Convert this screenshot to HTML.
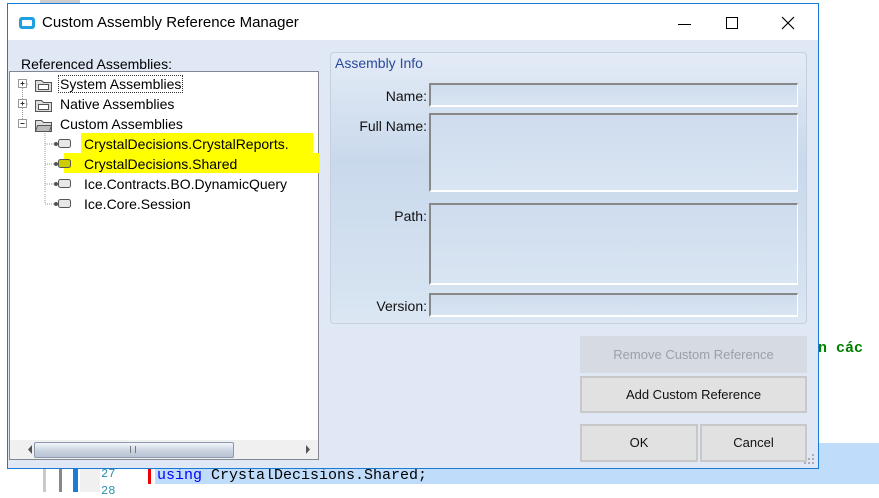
<!DOCTYPE html>
<html><head><meta charset="utf-8"><style>
*{margin:0;padding:0;box-sizing:border-box}
body{width:879px;height:492px;overflow:hidden;background:#fff;position:relative;font-family:"Liberation Sans",sans-serif;}
.a{position:absolute}
.dlg{left:7px;top:3px;width:812px;height:466px;border:1px solid #1a7ad4;background:#fff}
.client{left:0;top:36px;width:810px;height:428px;background:#dfe8f4}
.t{font-size:14px;color:#000;white-space:nowrap}
.tree{left:1px;top:31px;width:310px;height:389px;background:#fff;border:1px solid #828790}
.ti{font-size:14px;position:absolute;white-space:nowrap;line-height:18px}
.fld{position:absolute;background:linear-gradient(#cfdcee,#d9e5f2);border-top:2px solid #888;border-left:2px solid #888;border-right:1px solid #fff;border-bottom:2px solid #fff}
.lbl{position:absolute;font-size:14px;text-align:right;width:90px;color:#111}
.btn{position:absolute;background:#e1e1e1;border:2px solid #c8c8c8;font-size:13px;text-align:center;color:#111}
</style></head><body>
<div class="a" style="left:43px;top:468px;width:3px;height:24px;background:#c9c9c9"></div>
<div class="a" style="left:59px;top:468px;width:3px;height:24px;background:#888"></div>
<div class="a" style="left:73px;top:468px;width:5px;height:24px;background:#1c7bd6"></div>
<div class="a" style="left:80px;top:468px;width:20px;height:24px;background:#f0f0f0"></div>
<div class="a" style="left:155px;top:468px;width:724px;height:16px;background:#bfdcfa"></div>
<div class="a" style="left:818px;top:443px;width:61px;height:41px;background:#bfdcfa"></div>
<div class="a" style="left:101px;top:467px;font:12px 'Liberation Mono',monospace;color:#2b91af">27</div>
<div class="a" style="left:101px;top:484px;font:12px 'Liberation Mono',monospace;color:#2b91af">28</div>
<div class="a" style="left:148px;top:469px;width:3px;height:15px;background:#e00"></div>
<div class="a" style="left:157px;top:467px;font:15px 'Liberation Mono',monospace;white-space:pre"><span style="color:#0000ff">using</span> CrystalDecisions.Shared;</div>
<div class="a" style="left:818px;top:340px;font:bold 15px 'Liberation Mono',monospace;color:#008000;white-space:pre">n các </div>
<div class="a" style="left:40px;top:0;width:40px;height:3px;background:#ccc"></div>

<div class="a dlg">
 <svg class="a" style="left:10px;top:12px" width="18" height="14"><rect x="1" y="1" width="16" height="12" rx="3" fill="#1ea0e0"/><rect x="4" y="4" width="10" height="6" rx="1" fill="#fff"/></svg>
 <div class="a t" style="left:34px;top:10px;font-size:15px">Custom Assembly Reference Manager</div>
 <div class="a" style="left:670px;top:20px;width:13px;height:1px;background:#000"></div>
 <div class="a" style="left:718px;top:13px;width:12px;height:12px;border:1px solid #000"></div>
 <svg class="a" style="left:773px;top:12px" width="14" height="14"><path d="M1 1L13 13M13 1L1 13" stroke="#000" stroke-width="1.2"/></svg>
 <div class="a client">
  <div class="a t" style="left:13px;top:16px">Referenced Assemblies:</div>
  <div class="a tree">
   <svg class="a" style="left:0;top:0" width="120" height="150">
    <g stroke="#999" stroke-dasharray="1,1" fill="none">
     <path d="M12.5 14V52M13 32h6M13 12h6M35 55v66M35 72h10M35 92h10M35 112h10M35 132h10M35 122v10"/>
    </g>
    <g fill="#fff" stroke="#999"><rect x="8.5" y="7.5" width="8" height="8"/><rect x="8.5" y="27.5" width="8" height="8"/><rect x="8.5" y="47.5" width="8" height="8"/></g>
    <path d="M10.5 11.5h4M12.5 9.5v4M10.5 31.5h4M12.5 29.5v4M10.5 51.5h4" stroke="#333"/>
    <g stroke="#555" fill="#ddd"><path d="M25.5 8.5h6l2 2h8v9h-16z"/><rect x="28.5" y="12.5" width="10" height="5" fill="#fff"/>
    <path d="M25.5 28.5h6l2 2h8v9h-16z"/><rect x="28.5" y="32.5" width="10" height="5" fill="#fff"/>
    <path d="M25.5 48.5h6l2 2h8v9h-16z"/><path d="M27.5 53.5h14l-2 6h-14z" fill="#bbb"/></g>
    <g stroke="#555"><circle cx="46" cy="72" r="1.5" fill="#555"/><circle cx="46" cy="92" r="1.5" fill="#555"/><circle cx="46" cy="112" r="1.5" fill="#555"/><circle cx="46" cy="132" r="1.5" fill="#555"/></g>
   </svg>
   <div class="a" style="left:71px;top:61px;width:232px;height:20px;background:#ffff00"></div>
   <div class="a" style="left:54px;top:81px;width:256px;height:20px;background:#ffff00"></div>
   <svg class="a" style="left:0;top:0" width="120" height="150">
    <g stroke="#555"><rect x="48.5" y="67.5" width="12" height="8" rx="2" fill="#e8e8e8"/><rect x="48.5" y="87.5" width="12" height="8" rx="2" fill="#cccc00"/><rect x="48.5" y="107.5" width="12" height="8" rx="2" fill="#e8e8e8"/><rect x="48.5" y="127.5" width="12" height="8" rx="2" fill="#e8e8e8"/></g>
   </svg>
   <div class="ti" style="left:48px;top:3px;border:1px dotted #333;padding:0 1px;line-height:16px">System Assemblies</div>
   <div class="ti" style="left:50px;top:23px">Native Assemblies</div>
   <div class="ti" style="left:50px;top:43px">Custom Assemblies</div>
   <div class="ti" style="left:74px;top:63px">CrystalDecisions.CrystalReports.</div>
   <div class="ti" style="left:74px;top:83px">CrystalDecisions.Shared</div>
   <div class="ti" style="left:74px;top:103px">Ice.Contracts.BO.DynamicQuery</div>
   <div class="ti" style="left:74px;top:123px">Ice.Core.Session</div>
   <div class="a" style="left:0;top:368px;width:308px;height:19px;background:#f0f0f0"></div>
   <svg class="a" style="left:0;top:368px" width="308" height="19"><path d="M22 5l-4 4.5 4 4.5z" fill="#555"/><path d="M296 5l4 4.5-4 4.5z" fill="#555"/></svg>
   <div class="a" style="left:24px;top:370px;width:200px;height:16px;border:1px solid #8a99b0;border-radius:2px;background:linear-gradient(#f4f7fb,#c9d3e0 55%,#b7c3d3)"></div>
   <div class="a" style="left:120px;top:374px;width:6px;height:7px;border-left:1px solid #777;border-right:1px solid #777"></div>
  </div>
  <div class="a" style="left:322px;top:12px;width:477px;height:272px;border:1px solid #c5cfdd;border-radius:4px;background:linear-gradient(#e3ebf6,#c9d9ec 40%,#d6e3f1 90%,#dce7f3)"></div>
  <div class="a" style="left:327px;top:15px;font-size:14px;color:#2a4a9a">Assembly Info</div>
  <div class="lbl" style="left:329px;top:48px">Name:</div>
  <div class="lbl" style="left:329px;top:78px">Full Name:</div>
  <div class="lbl" style="left:329px;top:168px">Path:</div>
  <div class="lbl" style="left:329px;top:258px">Version:</div>
  <div class="fld" style="left:421px;top:43px;width:369px;height:24px"></div>
  <div class="fld" style="left:421px;top:73px;width:369px;height:79px"></div>
  <div class="fld" style="left:421px;top:163px;width:369px;height:82px"></div>
  <div class="fld" style="left:421px;top:253px;width:369px;height:24px"></div>
  <div class="btn" style="left:572px;top:296px;width:227px;height:37px;background:#d6dbe3;border-color:#d6dbe3;color:#9aa0a8;line-height:33px">Remove Custom Reference</div>
  <div class="btn" style="left:572px;top:336px;width:227px;height:37px;line-height:33px">Add Custom Reference</div>
  <div class="btn" style="left:572px;top:384px;width:118px;height:38px;line-height:34px">OK</div>
  <div class="btn" style="left:692px;top:384px;width:107px;height:38px;line-height:34px">Cancel</div>
  <svg class="a" style="left:796px;top:414px" width="12" height="12" fill="#aab"><rect x="8" y="0" width="2" height="2"/><rect x="4" y="4" width="2" height="2"/><rect x="8" y="4" width="2" height="2"/><rect x="0" y="8" width="2" height="2"/><rect x="4" y="8" width="2" height="2"/><rect x="8" y="8" width="2" height="2"/></svg>
 </div>
</div>
</body></html>
